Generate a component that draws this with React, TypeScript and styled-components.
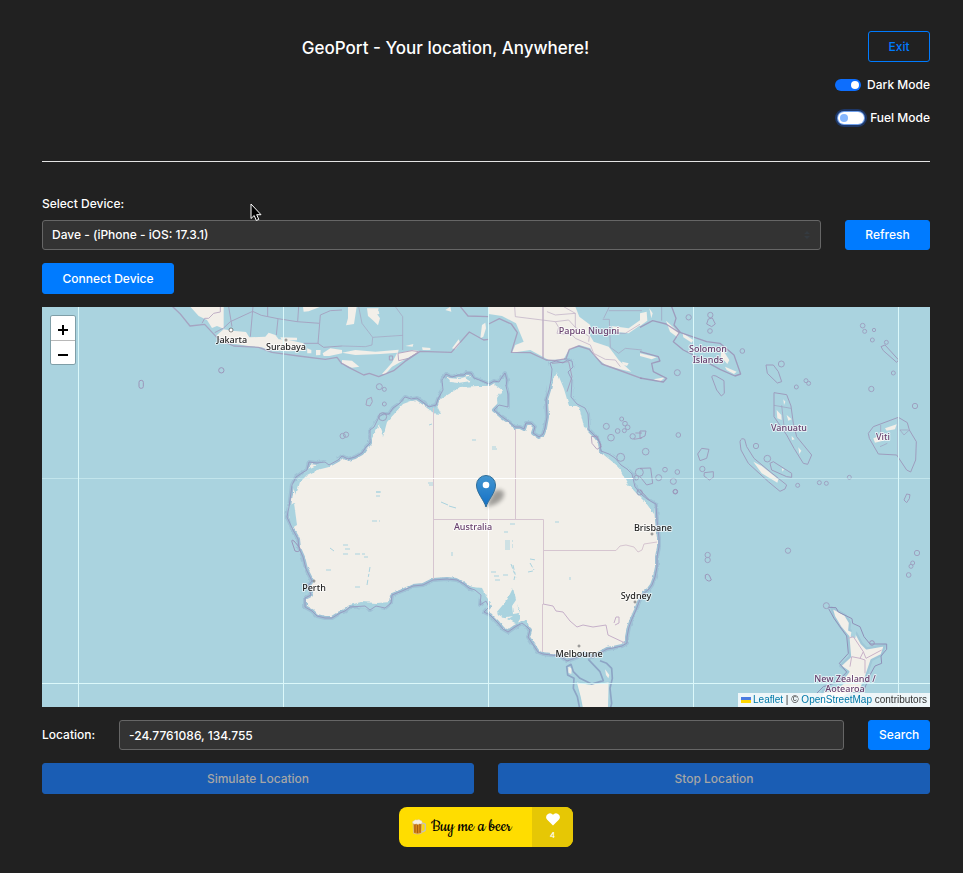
import React, { useState } from "react";
import styled, { createGlobalStyle, css } from "styled-components";

const GlobalStyle = createGlobalStyle`
  * { box-sizing: border-box; }
  body {
    margin: 0;
    background: #212121;
    color: #fff;
    font: 500 12px/20px Inter, "Liberation Sans", sans-serif;
  }
  button, input, select { font: inherit; }
`;

const Page = styled.main`
  padding: 31px 33px 26px 42px;
`;

const Header = styled.header`
  display: grid;
  grid-template-columns: 1fr auto;
  column-gap: 19px;
  border-bottom: 1px solid #e4e4e4;
  padding-bottom: 33px;
`;

const Title = styled.h1`
  margin: 0;
  font-size: 17px;
  font-weight: 500;
  line-height: 34px;
  text-align: center;
`;

const buttonBase = css<{ $height?: number }>`
  height: ${(p) => p.$height ?? 31}px;
  padding: 0 10px;
  border: 1px solid #007bff;
  border-radius: 3px;
  cursor: pointer;
  white-space: nowrap;
`;

const OutlineButton = styled.button<{ $height?: number }>`
  ${buttonBase}
  width: 62px;
  background: transparent;
  color: #007bff;
`;

const SolidButton = styled.button<{ $width?: number; $height?: number }>`
  ${buttonBase}
  width: ${(p) => (p.$width ? `${p.$width}px` : "100%")};
  background: #007bff;
  color: #fff;
  &:disabled {
    background: #1a5db4;
    border-color: #1a5db4;
    color: #a6a6a6;
    cursor: default;
  }
`;

const Toggles = styled.div`
  grid-column: 1 / -1;
  display: flex;
  flex-direction: column;
  align-items: flex-end;
  gap: 13px;
  margin-top: 10px;
`;

const ToggleLabel = styled.label`
  display: flex;
  align-items: center;
  gap: 6px;
`;

const Switch = styled.input<{ $focused?: boolean }>`
  appearance: none;
  display: flex;
  align-items: center;
  width: 26px;
  height: 12px;
  margin: 0;
  padding: 0 2px;
  border-radius: 6px;
  background: #fff;
  ${(p) => p.$focused && "box-shadow: 0 0 0 1px #6f9fea, 0 0 0 3px #1e3766;"}
  &::before {
    content: "";
    width: 8px;
    height: 8px;
    border-radius: 50%;
    background: #86b7fe;
  }
  &:checked {
    justify-content: flex-end;
    background: #0d6efd;
  }
  &:checked::before { background: #fff; }
`;

const Form = styled.form`
  display: flex;
  flex-direction: column;
  gap: 13px;
  padding-top: 32px;
`;

const DeviceField = styled.div`
  display: grid;
  grid-template-columns: 1fr auto;
  column-gap: 24px;
  row-gap: 6px;
  align-items: center;
  & > label { grid-column: 1 / -1; }
`;

const fieldBase = css`
  width: 100%;
  min-width: 0;
  height: 30px;
  padding: 0 9px;
  border: 1px solid #666;
  border-radius: 3px;
  background: #333;
  color: #fff;
  outline: none;
`;

const SelectWrap = styled.div`
  display: grid;
  align-items: center;
  & > * { grid-area: 1 / 1; }
  & > svg { justify-self: end; margin-right: 10px; pointer-events: none; }
`;

const DeviceSelect = styled.select`
  ${fieldBase}
  appearance: none;
`;

const LocationRow = styled.div`
  display: grid;
  grid-template-columns: 53px 1fr auto;
  gap: 24px;
  align-items: center;
`;

const LocationInput = styled.input`
  ${fieldBase}
`;

const Actions = styled.div`
  display: grid;
  grid-template-columns: 1fr 1fr;
  gap: 24px;
`;

const MapFrame = styled.section`
  position: relative;
  height: 400px;
  overflow: hidden;
  background: #aad3df;
`;

const MapDrawing = styled.svg`
  display: block;
  width: 100%;
  height: 100%;
`;

const ZoomBox = styled.div`
  position: absolute;
  top: 9px;
  left: 9px;
  width: 24px;
  border-radius: 2px;
  box-shadow: 0 0 0 1px rgba(0, 0, 0, 0.25);
  background: #fff;
  overflow: hidden;
`;

const ZoomButton = styled.button`
  display: grid;
  place-items: center;
  width: 24px;
  height: 24px;
  padding: 4px 0 0;
  border: 0;
  background: #fff;
  & + & { border-top: 1px solid #b8b8b8; }
`;

const Marker = styled.svg`
  position: absolute;
  left: calc(50% - 10px);
  bottom: calc(50% - 1px);
  overflow: visible;
`;

const Attribution = styled.div`
  position: absolute;
  right: 0;
  bottom: 0;
  display: flex;
  align-items: center;
  gap: 2px;
  height: 14px;
  padding: 0 3px;
  background: rgba(255, 255, 255, 0.8);
  color: #333;
  font: 400 10px/14px "Liberation Sans", Arial, sans-serif;
  & a { color: #0078a8; text-decoration: none; }
`;

const BeerLink = styled.a`
  align-self: center;
  display: flex;
  width: 174px;
  height: 40px;
  border-radius: 8px;
  overflow: hidden;
  background: #ffdd00;
  color: #000;
  text-decoration: none;
`;

const BeerText = styled.span`
  flex: 1;
  display: flex;
  align-items: center;
  gap: 5px;
  padding-left: 13px;
  font: 400 19px/40px Cookie, cursive;
  white-space: nowrap;
`;

const BeerCount = styled.span`
  display: flex;
  flex-direction: column;
  align-items: center;
  width: 41px;
  padding-top: 6px;
  gap: 3px;
  background: #e6c705;
  color: #fff;
  font: 700 8px/12px Lato, sans-serif;
`;

const Pointer = styled.svg`
  position: absolute;
  left: 250px;
  top: 203px;
  pointer-events: none;
`;

const AUSTRALIA =
  "M290 500L292 485L296 477L302 473L307 470L309 462L317 463L325 462L329 465L338 460L342 456L348 459L355 457L362 453L366 447L370 443L370 430L374 427L379 417L383 414L389 414L393 408L399 404L405 397L411 399L417 398L424 403L429 407L436 405L438 399L443 390L442 380L446 374L452 377L458 375L464 375L466 373L471 373L474 378L482 381L489 384L494 381L499 382L502 377L505 373L507 380L506 386L508 394L508 407L499 405L494 410L501 416L508 421L515 427L520 427L524 429L526 423L531 423L535 427L533 433L539 437L543 434L545 428L547 417L546 400L549 390L551 380L552 369L550 363L556 361L563 363L567 360L572 361L573 367L568 372L572 380L571 397L577 404L585 408L588 414L589 430L596 437L600 443L601 451L609 454L615 458L621 465L627 469L632 474L635 487L642 495L647 499L652 502L656 504L657 520L658 530L659 538L659 547L657 557L657 567L655 577L652 585L649 589L642 595L639 602L636 610L632 619L629 627L627 637L627 643L622 646L613 648L607 649L600 653L592 657L584 654L578 657L567 661L560 656L551 655L543 654L538 652L534 646L528 637L530 630L526 626L522 623L515 627L508 632L503 629L498 623L490 615L484 612L489 607L486 601L480 605L481 595L475 590L469 588L464 584L457 580L447 579L433 580L423 585L413 586L402 591L392 595L391 603L385 608L376 606L370 610L365 606L350 607L345 611L340 613L332 618L325 618L317 616L312 611L305 607L305 598L311 595L308 586L312 581L306 569L303 557L299 548L298 539L293 530L287 517L289 507Z";

type Circle = [number, number, number];

/* Islands east of the mainland, drawn on a grid three times as fine as the map. */
const EAST_ISLES: Circle[] = [
  [146, 52, 8], [211, 45, 8], [210, 93, 7], [307, 153, 7], [424, 192, 9], [469, 261, 6],
  [498, 242, 6], [506, 250, 6], [668, 77, 7], [674, 94, 6], [702, 90, 5], [697, 120, 6],
  [739, 127, 6], [760, 219, 6], [694, 267, 8], [825, 318, 8], [115, 405, 7], [348, 438, 8],
  [473, 556, 6], [538, 548, 6], [559, 550, 6], [628, 532, 6], [112, 516, 7], [75, 509, 7],
  [106, 575, 6], [17, 455, 10], [56, 533, 9], [100, 544, 9], [187, 507, 8], [112, 218, 9],
  [382, 476, 10],
];
const NORTH_ISLES: Circle[] = [
  [112, 260, 9], [127, 268, 6], [127, 312, 6], [122, 350, 12], [12, 404, 8], [2, 408, 8],
  [793, 379, 9], [807, 413, 10], [827, 393, 7], [839, 357, 6], [849, 371, 7], [857, 382, 7],
  [847, 392, 6], [872, 409, 8], [836, 472, 12], [883, 533, 7], [892, 517, 12], [893, 577, 8],
];
const SOUTH_ISLES: Circle[] = [
  [53, 75, 8], [53, 90, 8], [294, 62, 8], [681, 69, 8], [668, 99, 6], [663, 109, 6],
  [656, 135, 7], [409, 227, 9],
];

const GRID_X = [78, 283, 488, 693, 898];
const GRID_Y = [478, 683];

const COUNTRIES: [string, number, number][] = [
  ["Papua Niugini", 589, 334],
  ["Solomon", 708, 352],
  ["Islands", 708, 363],
  ["Vanuatu", 789, 431],
  ["Viti", 883, 440],
  ["Australia", 473, 530],
  ["New Zealand /", 845, 682],
  ["Aotearoa", 845, 692],
];
const CITIES: [string, number, number][] = [
  ["Jakarta", 232, 343],
  ["Surabaya", 286, 350],
  ["Perth", 314, 591],
  ["Brisbane", 653, 531],
  ["Sydney", 636, 599],
  ["Melbourne", 579, 657],
];
const TOWNS: Circle[] = [
  [231, 330, 2], [286, 340, 1], [314, 581, 1], [652, 534, 1], [635, 602, 1], [579, 646, 1],
];

function Isles({ items }: { items: Circle[] }) {
  return (
    <g fill="none" stroke="#9b95b9" strokeWidth="3" opacity="0.8">
      {items.map(([x, y, r]) => (
        <circle key={`${x}-${y}`} cx={x} cy={y} r={r} />
      ))}
    </g>
  );
}

function WorldMap() {
  return (
    <MapDrawing viewBox="42 307 888 400" preserveAspectRatio="xMidYMid slice" role="img" aria-label="Map of Australia and Oceania">
      <defs>
        <filter id="coast" x="-5%" y="-5%" width="110%" height="110%">
          <feTurbulence type="fractalNoise" baseFrequency="0.18" numOctaves="3" seed="4" />
          <feDisplacementMap in="SourceGraphic" scale="3" xChannelSelector="R" yChannelSelector="G" />
        </filter>
      </defs>

      {/* Mainland */}
      <g filter="url(#coast)" strokeLinejoin="round">
        <path d={AUSTRALIA} fill="#f2efe9" stroke="#9fc2d6" strokeWidth="4" />
        <g fill="#aad3df">
          <path d="M549 360L575 360L574 379L573 398L588 408L591 430L584 427L579 406L569 406L564 389L557 372L552 380L547 400Z" />
          <path d="M306 470L325 461L343 457L329 467L317 470L307 475L300 482L296 495L292 485Z" />
          <path d="M369 444L370 430L379 416L389 415L405 397L414 400L403 404L395 413L387 422L383 437L379 425Z" />
          <path d="M427 407L437 406L441 414L432 413Z" />
          <path d="M442 378L457 378L469 376L489 386L478 386L460 387L449 394L441 399Z" />
          <path d="M494 384L505 377L509 408L498 412L497 398L502 390Z" />
          <path d="M600 446L625 463L633 475L637 491L654 504L654 514L646 503L637 494L627 483L619 467L604 455Z" />
          <path d="M350 605L361 602L377 603L391 602L385 609L370 610Z" />
          <path d="M470 587L482 588L486 596L490 602L489 614L483 603L478 597Z" />
          <path d="M496 613L507 600L513 588L516 600L512 606L513 614L520 613L517 604L520 610L520 619L517 624L508 619L513 616L507 617L504 618Z" />
          <path d="M513 624L520 622L527 620L527 627L520 624Z" />
          <path d="M287 507L294 503L297 525L292 528Z" />
        </g>
        <path d="M448 378L459 379L465 377L471 381L458 383L450 382Z" fill="#f2efe9" />
      </g>
      <path d={AUSTRALIA} fill="none" stroke="#938fb9" strokeWidth="1" strokeLinejoin="round" opacity="0.75" />

      {/* Lakes */}
      <g fill="none" stroke="#aad3df" strokeWidth="1" strokeDasharray="5 2 3 3 6 2">
        <path d="M505 541H513M505 543H512M505 545H513M505 547H513M505 549H512M510 524H517M504 532H508" />
        <path d="M511 564L515 575L514 580M513 565L516 578M530 559L536 560M530 563L534 570M528 572L533 571M491 572H498M494 576H501M495 580H500M503 575H508" />
        <path d="M343 545H350M345 549H351M343 554H349M355 554H368M364 557H368M370 567L367 585M355 587H362M372 521H380M376 492H380M376 496H380M326 570H331M330 548L334 551" />
        <path d="M428 483H434M429 485H433M376 492H381M472 440H476M492 447H496M492 449H497M441 502L448 505M449 506L456 508M452 552V556M555 522H559M570 577V580M429 425L432 424" strokeDasharray="none" />
      </g>

      {/* State borders */}
      <g fill="none" stroke="#d6c5d0" strokeWidth="1">
        <path d="M433.500 408V579M515.500 429V519.500M433.500 519.500H543.500V604M542.500 604V652M543.500 550.500H616L620 546L626 545L634 547L638 552L642 550L644 544L657 542" />
        <path d="M543 604L553 606L556 611L563 612L570 621L577 627L583 625L593 627L606 625L608 635L625 643M614 623L616 617L619 617L619 623L615 625" stroke="#c6b0c9" />
      </g>

      {/* Java, Sumatra and the Sunda sea */}
      <g transform="translate(42 300) scale(0.33333)" strokeLinejoin="round">
        <g fill="#f2efe9" filter="url(#coast)">
          <path d="M445 20H545V86L525 78L510 84L495 60L470 48Z" />
          <path d="M525 105L545 88L570 92L612 96L622 112L670 110L680 98L700 105L710 118L740 120L785 130L790 152L740 154L680 150L660 142L620 138L580 132L540 130Z" />
          <path d="M715 112L765 113L765 121L720 121ZM783 20H835L800 34L785 35ZM795 145L808 150L808 160L796 160ZM822 150L836 150L835 165L822 166ZM842 160L865 145L900 150L900 160L862 168L845 168Z" />
        </g>
        <g fill="none" stroke="#a38cb2" strokeWidth="3" opacity="0.65">
          <path d="M392 20L415 42L444 78L488 73L530 118L575 138L650 142L690 157L770 168L850 178L885 172L900 192" strokeWidth="4" />
          <path d="M518 98L545 84L565 65L632 34L658 46L708 56L765 65L833 70L835 45L865 32L900 30M560 20L570 80M633 20L625 110M677 20V50M708 57L703 105M770 20L767 64M833 70L828 130L845 142L900 138M785 130H830M480 70L488 55L500 55L515 40L535 36V20" />
        </g>
        <g fill="none" stroke="#9b95b9" strokeWidth="3"><circle cx="538" cy="211" r="8" /><rect x="291" y="241" width="13" height="24" rx="6" /></g>
      </g>

      {/* Timor, New Guinea */}
      <g transform="translate(342 300) scale(0.33333)" strokeLinejoin="round">
        <g fill="#f2efe9" filter="url(#coast)">
          <path d="M18 20H44L36 72L12 76L18 55ZM75 25H110L105 42L114 55L108 76L92 60L78 48ZM88 36L110 32L112 42L92 44ZM0 158L40 150L100 155L170 149L168 158L115 162L40 165ZM0 180L30 182L52 200L30 203L0 190Z" />
          <path d="M120 222L150 188L165 160L215 150L234 154L190 178L150 200L130 222ZM330 145L350 118L355 130L340 148ZM415 115L420 75L430 68L432 85L424 110ZM190 138L214 132L212 140ZM310 30L325 20L328 35ZM240 142L265 144L265 150L242 150Z" />
          <path d="M440 20H700L712 50L745 75L740 100L755 125L800 140L830 180L868 215L835 208L790 195L755 165L745 145L712 135L680 150L665 178L620 180L565 150L510 158L520 135L545 125L522 70L480 48L440 42Z" />
          <path d="M808 78L860 85L895 60L900 72L860 100L820 95ZM840 185L860 190L855 198L842 194Z" />
        </g>
        <g fill="none" stroke="#a38cb2" strokeWidth="4" opacity="0.7">
          <path d="M440 72L472 56L508 72L526 98L508 157L565 158L612 180L640 182L672 176L682 148L710 138L742 148L780 192L830 210L900 236M440 118L425 120L382 96L328 157L234 154L188 185L155 212L110 230L82 220L65 225L20 202L0 190" />
          <path d="M355 20L378 48L440 50M603 20V175" />
          <path d="M160 20L182 50V150M0 138L70 140L90 135L92 112L182 106M92 112L60 70L50 20M518 20L520 50L600 60L640 65L650 82L645 100L690 104L700 115L745 135L755 160L790 178L820 180L835 200M615 35L640 45L700 40L665 20M640 65L680 60L700 82L742 110L740 125M700 40V82M782 58H802L805 142L830 160L850 145L900 150M802 20L785 55M800 32H900M805 100H850L895 72" strokeWidth="2" />
          <path d="M168 160L210 152L230 155L200 175L170 182ZM142 168H152V180H142ZM72 315L75 298L88 292L91 305L84 318ZM748 410L765 408L778 440L765 448L750 430ZM630 190L680 185L690 230L675 275" strokeWidth="3" />
          <path d="M880 399H900M875 418L900 414" strokeWidth="3" />
        </g>
        <Isles items={NORTH_ISLES} />
      </g>

      {/* Solomon Islands, Vanuatu, New Caledonia, Fiji */}
      <g transform="translate(640 300) scale(0.33333)" strokeLinejoin="round">
        <g fill="#f2efe9" filter="url(#coast)">
          <path d="M0 40L20 35L22 62L0 78ZM28 25L38 40L34 55ZM78 62L100 82L118 100L112 112L90 95ZM128 100L160 120L155 128L130 112ZM245 145L268 180L262 192L242 170ZM255 200L290 215L282 222L260 210ZM410 330L424 345L425 360L412 355ZM455 408L464 418L456 420ZM475 442L484 452L478 462ZM340 485L365 498L415 538L412 548L365 520ZM735 385L770 373L765 388L740 392ZM700 415L735 402L738 420L705 428ZM430 298L436 305L432 315ZM425 505L432 508L428 515ZM440 345L455 358L445 362ZM0 160L50 172L35 178L0 168ZM40 238L75 232L60 245Z" />
        </g>
        <g fill="none" stroke="#9b8fb5" strokeWidth="4" opacity="0.8">
          <path d="M95 20L108 55L102 75L122 98L200 125L240 130L282 165L302 222L285 228L240 208L180 175L130 150L100 125L118 98L78 72L38 62L0 82M0 155L55 170L60 183L35 190L40 215L80 235L70 246L0 234" />
          <path d="M215 230Q218 224 228 228L252 242L253 280L244 288L230 270ZM378 195L400 195L415 215L425 245L412 249L382 220ZM402 278L440 284L453 318L460 370L470 410L515 465L503 493L490 490L462 445L440 405L402 350ZM300 425Q303 412 314 418L320 440L342 475L390 515L440 555L435 567L420 574L385 545L325 490L303 450ZM390 490L400 485L455 520L455 532L440 530L395 510ZM685 400L700 380L775 352L802 368L808 390L829 425L827 480L812 516L800 510L770 465L715 462L688 415ZM723 140L735 135L776 180L770 187L730 152ZM173 462L185 445L207 448L200 475L180 482ZM205 57L217 54L226 72L215 80L200 72ZM0 393L18 393L15 408L0 415ZM0 505L32 504L38 550L20 555L0 530M193 518L220 515L220 532L208 540L192 528ZM792 600L800 582L810 584L808 596L800 608ZM0 570L28 600" strokeWidth="3" />
          <path d="M774 355V470M402 316L453 325M425 316L432 378M722 375V400M805 390H780L792 405L808 390M720 440L742 430M65 20V62" strokeWidth="2" />
        </g>
        <Isles items={EAST_ISLES} />
      </g>

      {/* Tasmania */}
      <g transform="translate(500 490) scale(0.33333)" strokeLinejoin="round">
        <path d="M228 575L268 582L328 575L326 660H248L240 620Z" fill="#f2efe9" stroke="#a4cfdd" strokeWidth="4" filter="url(#coast)" />
        <path d="M205 530L215 535L214 552L205 548ZM315 538L328 555L325 565L318 555Z" fill="#f2efe9" />
        <path d="M240 660L232 620L220 595L222 565L203 555L200 530L213 523L220 545L240 565L275 582L310 572L300 545L265 508M300 512L320 520L335 535L337 565L330 595L335 640L330 660" fill="none" stroke="#8da5c5" strokeWidth="5" />
        <path d="M616 255Q622 250 628 256L634 270Q626 278 616 266Z" fill="none" stroke="#9b95b9" strokeWidth="3" />
        <circle cx="526" cy="5" r="7" fill="none" stroke="#9b95b9" strokeWidth="3" />
      </g>
      <path d="M292 542Q291 539 294 541L300 548Q300 553 295 551Z" fill="none" stroke="#9b95b9" />

      {/* New Zealand */}
      <g transform="translate(690 530) scale(0.33333)" strokeLinejoin="round">
        <g filter="url(#coast)">
          <path d="M424 232L440 240L466 255L480 278L478 300L498 308L515 340L530 355L585 345L575 375L545 390L528 440L510 485L470 495L430 530H385L400 480L440 470L475 425L450 408L480 380L475 320L450 290L432 260Z" fill="#f2efe9" stroke="#9fc7d8" strokeWidth="7" />
          <path d="M487 287L500 295L496 325L482 320ZM400 490L425 460L470 455L440 478Z" fill="#aad3df" />
        </g>
        <path d="M416 232L438 233L445 246L486 266L488 280L510 290L522 320L540 342L590 342L590 358L573 378L575 400L555 408L540 435L520 485M416 236L432 265L470 318L475 370L448 400L470 426L440 458L400 470L380 490" fill="none" stroke="#8f91b8" strokeWidth="3" />
        <path d="M475 325L490 320L520 365L510 385L485 380L480 410M510 385L525 390L525 430M520 365L528 385L575 360" fill="none" stroke="#c8b2c8" strokeWidth="3" />
        <circle cx="546" cy="339" r="7" fill="none" stroke="#9b95b9" strokeWidth="3" />
        <Isles items={SOUTH_ISLES} />
      </g>

      {/* Tile seams */}
      <g fill="#e4ffff" opacity="0.85">
        {GRID_X.map((x) => <rect key={x} x={x} y="307" width="1" height="400" />)}
        {GRID_Y.map((y) => <rect key={y} x="42" y={y} width="888" height="1" opacity={y === 478 ? 0.5 : 1} />)}
      </g>
      <path d="M488.500 384V613M310 478.500H633" stroke="#fff" />

      <g fill="#fff" stroke="#555" strokeWidth="0.7">
        {TOWNS.map(([x, y, r]) => <circle key={`${x}-${y}`} cx={x} cy={y} r={r} />)}
      </g>
      <g fontFamily='"Noto Sans", sans-serif' fontSize="9" textAnchor="middle" paintOrder="stroke" strokeLinejoin="round" stroke="#fff" strokeOpacity="0.65" strokeWidth="2">
        <g fill="#68406e">{COUNTRIES.map(([name, x, y]) => <text key={name} x={x} y={y}>{name}</text>)}</g>
        <g fill="#222">{CITIES.map(([name, x, y]) => <text key={name} x={x} y={y}>{name}</text>)}</g>
      </g>
    </MapDrawing>
  );
}

function MapPin() {
  return (
    <Marker width="20" height="33" viewBox="0 0 20 33" aria-label="Selected location">
      <defs>
        <linearGradient id="pin" x1="0" y1="0" x2="0" y2="1">
          <stop offset="0" stopColor="#4396d0" />
          <stop offset="1" stopColor="#126fc6" />
        </linearGradient>
        <filter id="soft" x="-50%" y="-50%" width="200%" height="200%"><feGaussianBlur stdDeviation="2" /></filter>
      </defs>
      <path d="M10 32L17 17Q23 12 28 17Q29 24 20 29Z" fill="#000" opacity="0.35" filter="url(#soft)" />
      <path d="M10 32C8 25 0.500 18 0.500 10A9.500 9.500 0 0 1 19.500 10C19.500 18 12 25 10 32Z" fill="url(#pin)" stroke="#2e6c97" strokeWidth="1" />
      <circle cx="10" cy="10" r="3.300" fill="#fff" />
    </Marker>
  );
}

function BeerMug() {
  return (
    <svg width="14" height="16" viewBox="0 0 14 16" aria-hidden="true">
      <path d="M9.500 4.500H12Q13.300 4.500 13.300 6V10.500Q13.300 12.500 9.500 13" fill="none" stroke="#c9c3ae" strokeWidth="1.500" />
      <path d="M1 3.500H10L9.600 14.300Q5.500 16 1.500 14.300Z" fill="#d98a1c" stroke="#d9cda8" strokeWidth="0.700" />
      <path d="M3 5V13.500M5.500 5V14M8 5V13.500" stroke="#a95c10" strokeWidth="1.100" />
      <path d="M0.600 4Q0 2 2 1.800Q3 0.200 5 1Q7 0 8.400 1.300Q10.500 1.500 10.200 4Q9 5.500 7.500 4.700Q6 6 4.400 4.800Q2 5.800 0.600 4Z" fill="#f7efe0" stroke="#d8c9a5" strokeWidth="0.400" />
    </svg>
  );
}

export default function App() {
  const [dark, setDark] = useState(true);
  const [fuel, setFuel] = useState(false);
  const [location, setLocation] = useState("-24.7761086, 134.755");

  return (
    <>
      <GlobalStyle />
      <Page>
        <Header>
          <Title>GeoPort - Your location, Anywhere!</Title>
          <OutlineButton type="button">Exit</OutlineButton>
          <Toggles>
            <ToggleLabel>
              <Switch type="checkbox" role="switch" checked={dark} onChange={(e) => setDark(e.target.checked)} />
              Dark Mode
            </ToggleLabel>
            <ToggleLabel>
              <Switch type="checkbox" role="switch" $focused checked={fuel} onChange={(e) => setFuel(e.target.checked)} />
              Fuel Mode
            </ToggleLabel>
          </Toggles>
        </Header>

        <Form onSubmit={(e) => e.preventDefault()}>
          <DeviceField>
            <label htmlFor="device">Select Device:</label>
            <SelectWrap>
              <DeviceSelect id="device">
                <option>Dave - (iPhone - iOS: 17.3.1)</option>
              </DeviceSelect>
              <svg width="8" height="8" viewBox="0 0 8 8" aria-hidden="true">
                <path d="M4 0L7 3H1ZM4 8L1 5H7Z" fill="#343a40" />
              </svg>
            </SelectWrap>
            <SolidButton type="button" $width={85} $height={30}>Refresh</SolidButton>
          </DeviceField>
          <SolidButton type="button" $width={132}>Connect Device</SolidButton>

          <MapFrame>
            <WorldMap />
            <MapPin />
            <ZoomBox>
              <ZoomButton type="button" aria-label="Zoom in">
                <svg width="10" height="10" viewBox="0 0 10 10"><path d="M5 0V10M0 5H10" stroke="#000" strokeWidth="2" /></svg>
              </ZoomButton>
              <ZoomButton type="button" aria-label="Zoom out">
                <svg width="10" height="10" viewBox="0 0 10 10"><path d="M0 5H10" stroke="#000" strokeWidth="2" /></svg>
              </ZoomButton>
            </ZoomBox>
            <Attribution>
              <svg width="10" height="6" viewBox="0 0 10 6" aria-hidden="true">
                <path d="M0 0H10V3H0Z" fill="#4c7be1" />
                <path d="M0 3H10V6H0Z" fill="#ffd500" />
              </svg>
              <span>
                <a href="#leaflet">Leaflet</a> | © <a href="#openstreetmap">OpenStreetMap</a> contributors
              </span>
            </Attribution>
          </MapFrame>

          <LocationRow>
            <label htmlFor="location">Location:</label>
            <LocationInput id="location" value={location} onChange={(e) => setLocation(e.target.value)} />
            <SolidButton type="submit" $width={62} $height={30}>Search</SolidButton>
          </LocationRow>

          <Actions>
            <SolidButton type="button" disabled>Simulate Location</SolidButton>
            <SolidButton type="button" disabled>Stop Location</SolidButton>
          </Actions>

          <BeerLink href="#beer">
            <BeerText>
              <BeerMug />
              Buy me a beer
            </BeerText>
            <BeerCount>
              <svg width="14" height="13" viewBox="0 0 14 13" aria-hidden="true">
                <path d="M7 12.500L1.200 6.700A3.700 3.700 0 0 1 7 1.800A3.700 3.700 0 0 1 12.800 6.700Z" fill="#fff" />
              </svg>
              4
            </BeerCount>
          </BeerLink>
        </Form>
      </Page>
      <Pointer width="12" height="19" viewBox="0 0 12 19" aria-hidden="true">
        <path d="M1 1V15.500L4.200 12.500L6.300 17.500L8.800 16.400L6.700 11.700H11Z" fill="#000" stroke="#fff" strokeWidth="1" />
      </Pointer>
    </>
  );
}
